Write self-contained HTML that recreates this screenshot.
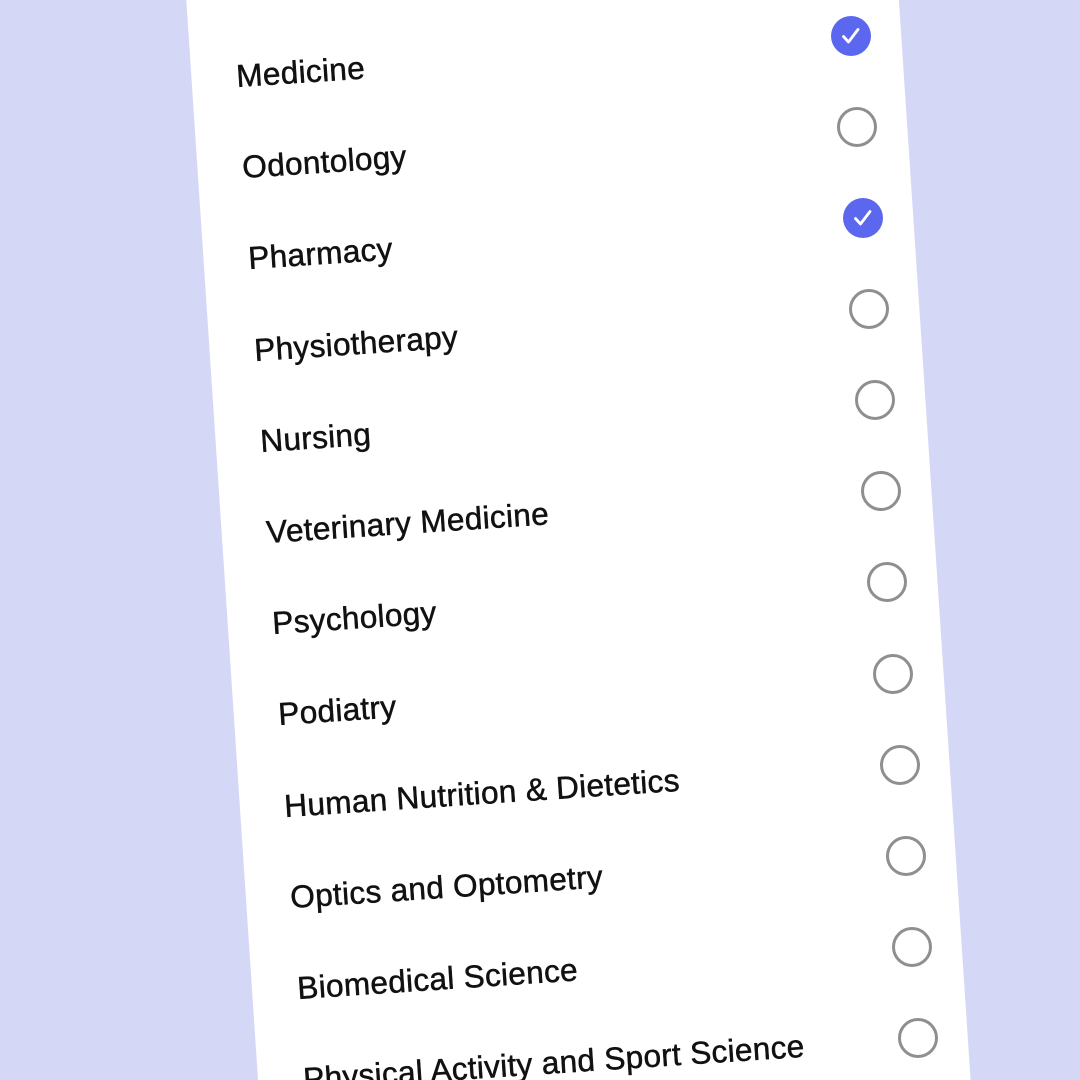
<!DOCTYPE html>
<html><head><meta charset="utf-8"><style>
html,body{margin:0;padding:0;width:1080px;height:1080px;overflow:hidden;}
body{background:#d5d7f6;font-family:"Liberation Sans",sans-serif;}
.wrap{position:relative;width:1080px;height:1080px;overflow:hidden;}
.panel{position:absolute;left:172.7px;top:-200px;width:711px;height:1340px;background:#fff;transform:rotate(-3.8deg);transform-origin:0 0;}
.t{position:absolute;font-size:31.6px;line-height:32px;height:32px;white-space:nowrap;color:#111;transform:rotate(-3.8deg);transform-origin:0 27px;letter-spacing:0.3px;-webkit-text-stroke:0.5px #111;}
.c{position:absolute;width:34px;height:34px;border:3px solid #8f8f8f;border-radius:50%;}
.k{position:absolute;width:40px;height:40px;border-radius:50%;background:#5b67ee;}
</style></head><body><div class="wrap">
<div class="panel"></div>
<div class="t" style="left:237px;top:60px">Medicine</div>
<div class="t" style="left:243px;top:151px">Odontology</div>
<div class="t" style="left:249px;top:242px">Pharmacy</div>
<div class="t" style="left:255px;top:334px">Physiotherapy</div>
<div class="t" style="left:261px;top:425px">Nursing</div>
<div class="t" style="left:267px;top:516px">Veterinary Medicine</div>
<div class="t" style="left:273px;top:607px">Psychology</div>
<div class="t" style="left:279px;top:698px">Podiatry</div>
<div class="t" style="left:285px;top:790px">Human Nutrition &amp; Dietetics</div>
<div class="t" style="left:291px;top:881px">Optics and Optometry</div>
<div class="t" style="left:298px;top:972px">Biomedical Science</div>
<div class="t" style="left:304px;top:1063px">Physical Activity and Sport Science</div>

<div class="k" style="left:831px;top:16px"><svg width="40" height="40" viewBox="0 0 40 40"><path d="M12.5 20.5 L17.5 26 L27 13.5" fill="none" stroke="#fff" stroke-width="2.8" stroke-linecap="round" stroke-linejoin="round"/></svg></div>
<div class="c" style="left:837px;top:107px"></div>
<div class="k" style="left:843px;top:198px"><svg width="40" height="40" viewBox="0 0 40 40"><path d="M12.5 20.5 L17.5 26 L27 13.5" fill="none" stroke="#fff" stroke-width="2.8" stroke-linecap="round" stroke-linejoin="round"/></svg></div>
<div class="c" style="left:849px;top:289px"></div>
<div class="c" style="left:855px;top:380px"></div>
<div class="c" style="left:861px;top:471px"></div>
<div class="c" style="left:867px;top:562px"></div>
<div class="c" style="left:873px;top:654px"></div>
<div class="c" style="left:880px;top:745px"></div>
<div class="c" style="left:886px;top:836px"></div>
<div class="c" style="left:892px;top:927px"></div>
<div class="c" style="left:898px;top:1018px"></div>
</div></body></html>
